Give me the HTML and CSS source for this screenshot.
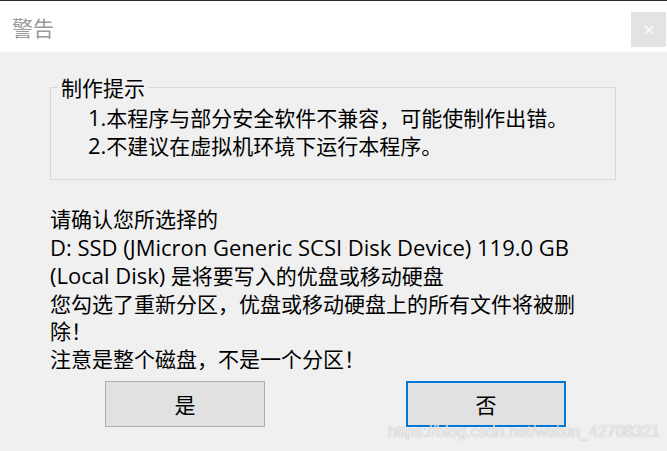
FILE: index.html
```html
<!DOCTYPE html>
<html lang="zh-CN">
<head>
<meta charset="utf-8">
<title>警告</title>
<link rel="stylesheet" href="styles.css">
</head>
<body>
<div class="window">
  <div class="topline"></div>
  <div class="titlebar">
    <div class="title">警告</div>
    <div class="close">
      <svg width="10" height="10" viewBox="0 0 10 10"><path d="M1 1 L9 9 M9 1 L1 9" stroke="#f6f6f6" stroke-width="2"/></svg>
    </div>
  </div>
  <div class="content">
    <fieldset class="group">
      <legend class="legend">制作提示</legend>
      <div class="tips">
        <div><span class="lat">1.</span>本程序与部分安全软件不兼容，可能使制作出错。</div>
        <div><span class="lat">2.</span>不建议在虚拟机环境下运行本程序。</div>
      </div>
    </fieldset>
    <div class="message">
      <div>请确认您所选择的</div>
      <div><span class="lat">D: SSD (JMicron Generic SCSI Disk Device) 119.0 GB</span></div>
      <div><span class="lat">(Local Disk)</span> 是将要写入的优盘或移动硬盘</div>
      <div>您勾选了重新分区，优盘或移动硬盘上的所有文件将被删</div>
      <div>除！</div>
      <div>注意是整个磁盘，不是一个分区！</div>
    </div>
    <div class="buttons">
      <button class="btn">是</button>
      <button class="btn btn-default">否</button>
    </div>
  </div>
  <div class="watermark">https://blog.csdn.net/weixin_42708321</div>
</div>
</body>
</html>
```
FILE: styles.css
```css
html, body {
  margin: 0;
  padding: 0;
}
body {
  width: 667px;
  height: 451px;
  overflow: hidden;
  background: #f0f0f0;
  font-family: "Open Sans", "Noto Sans CJK SC", sans-serif;
  color: #000;
}
.window {
  position: relative;
  width: 667px;
  height: 451px;
}
.topline {
  height: 1px;
  background: #2b2b2b;
}
.titlebar {
  height: 51px;
  background: #fff;
  display: flex;
  align-items: flex-start;
  justify-content: space-between;
}
.title {
  margin: 12px 0 0 12px;
  font-family: "Noto Sans CJK SC", sans-serif;
  font-size: 21px;
  line-height: 28px;
  color: #9a9a9a;
}
.close {
  margin: 11px 1px 0 0;
  width: 35px;
  height: 35px;
  background: #e3e3e3;
  display: flex;
  align-items: center;
  justify-content: center;
}
.content {
  padding: 0 51px 0 50px;
}
.group {
  margin: 22px 0 0 0;
  padding: 0 0 0 7px;
  height: 106px;
  box-sizing: border-box;
  border: 1px solid #d9d9d9;
  font-size: 21px;
}
.legend {
  padding: 0 3px;
  line-height: 27px;
  font-family: "Noto Sans CJK SC", sans-serif;
}
.tips {
  margin: 3px 0 0 30px;
  line-height: 27px;
}
.lat {
  font-family: "Open Sans", sans-serif;
  font-size: 22px;
}
.message {
  margin-top: 26px;
  font-size: 21px;
  line-height: 27.6px;
}
.buttons {
  display: flex;
  gap: 141px;
  padding-left: 55px;
  margin-top: 7px;
}
.btn {
  width: 160px;
  height: 46px;
  box-sizing: border-box;
  border: 1px solid #adadad;
  background: #e1e1e1;
  font-family: "Noto Sans CJK SC", sans-serif;
  font-size: 21px;
  color: #000;
  padding: 0;
}
.btn-default {
  border: 2px solid #0078d7;
}
.watermark {
  position: absolute;
  left: 388px;
  top: 423px;
  font-family: "Liberation Sans", sans-serif;
  font-size: 16px;
  color: rgba(255, 255, 255, 0.8);
  text-shadow: 0 0 1px rgba(120, 120, 120, 0.7);
  white-space: nowrap;
}
```
